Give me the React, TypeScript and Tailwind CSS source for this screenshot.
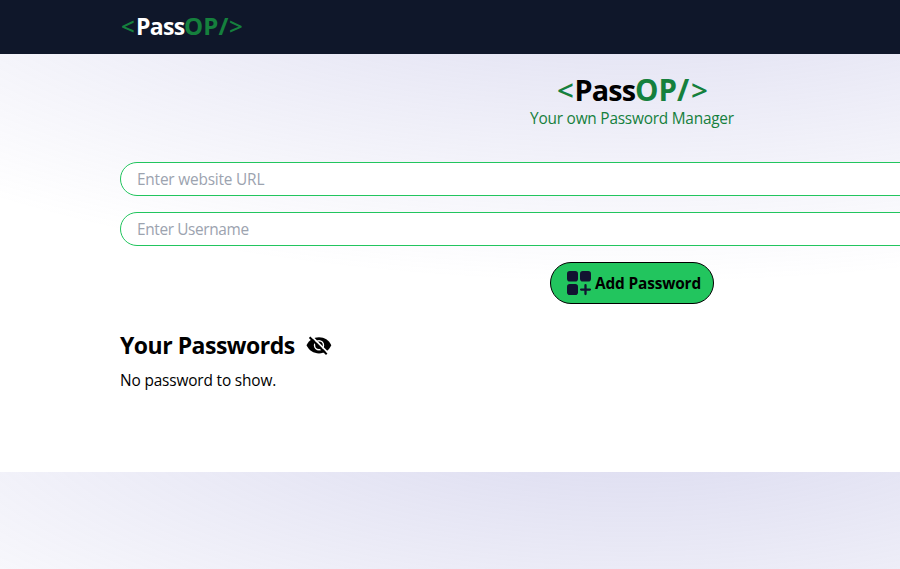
function AddIcon() {
  return (
    <svg width="28" height="28" viewBox="0 0 28 28" fill="#121331" className="shrink-0">
      <rect x="2" y="2" width="11" height="10.600" rx="2.800" />
      <rect x="15" y="2" width="11" height="10.600" rx="2.800" />
      <rect x="2" y="15" width="11" height="11" rx="2.800" />
      <path d="M20.500 16.200v8.800M16.100 20.600h8.800" stroke="#121331" strokeWidth="2.300" strokeLinecap="round" />
    </svg>
  );
}

function HiddenIcon() {
  return (
    <svg width="26" height="20" viewBox="0 0 26 20" className="shrink-0">
      <path d="M.5 9.300C3 4 7.600 1.200 13 1.200S23 4 25.300 9.300C23 14.600 18.400 17.400 13 17.400S3 14.600.5 9.300Z" fill="#000" />
      <circle cx="13" cy="9.300" r="4.500" fill="none" stroke="#fff" strokeWidth="1.400" />
      <path d="M5.300 0 22.600 17.300" stroke="#fff" strokeWidth="1.800" />
      <path d="M3.600 1.200 20.700 18.300" stroke="#000" strokeWidth="2" />
    </svg>
  );
}

function NavBrand() {
  return (
    <div className="flex pl-px text-[24px] leading-8 font-bold text-[#15803d]">
      <span className="w-[15px] font-semibold">&lt;</span>
      <span className="w-[48px] text-[23px] tracking-[-0.7px] text-white">Pass</span>
      <span className="w-[45px] tracking-[0.2px]">OP/</span>
      <span className="font-semibold">&gt;</span>
    </div>
  );
}

function Brand() {
  return (
    <h1 className="flex pl-px text-[29.5px] leading-9 font-bold text-[#15803d]">
      <span className="w-[17.5px] font-semibold">&lt;</span>
      <span className="w-[60.5px] text-[28.8px] tracking-[-0.9px] text-black">Pass</span>
      <span className="w-[56px]">OP/</span>
      <span className="font-semibold">&gt;</span>
    </h1>
  );
}

const field =
  "h-[34px] min-w-0 flex-1 rounded-full border border-[#22c55e] bg-white px-4 pt-px text-[15.4px] outline-none placeholder:text-[#9ca3af]";

export default function App() {
  return (
    <div className="h-[569px] w-full overflow-hidden bg-white font-['Open_Sans','Noto_Sans',sans-serif] text-[15.4px] text-black">
      <div className="h-[569px] w-[1264px] bg-[radial-gradient(ellipse_80%_80%_at_50%_-20%,rgba(120,119,198,0.3),rgba(255,255,255,0))] bg-[length:1264px_472px] bg-repeat-y">
        <nav className="flex h-[54px] items-center bg-[#0f172a] px-[120px] pb-0.5">
          <NavBrand />
        </nav>
        <main className="px-[120px] pt-[18px]">
          <header className="flex flex-col items-center">
            <Brand />
            <p className="leading-[22px] tracking-[-0.22px] text-[#15803d]">Your own Password Manager</p>
          </header>
          <form className="mt-8 flex flex-col items-center gap-4">
            <div className="flex w-full">
              <input className={`${field} tracking-[-0.19px]`} placeholder="Enter website URL" />
            </div>
            <div className="flex w-full">
              <input className={`${field} tracking-[-0.36px]`} placeholder="Enter Username" />
            </div>
            <button
              type="button"
              className="flex h-[42px] w-[164px] items-center rounded-full border border-black bg-[#22c55e] pl-3.5 font-bold tracking-[-0.15px] whitespace-nowrap"
            >
              <AddIcon />
              <span className="pt-0.5 pl-0.5">Add Password</span>
            </button>
          </form>
          <section className="mt-[25px]">
            <div className="flex h-8 items-center">
              <h2 className="w-[185.5px] text-[23px] font-bold tracking-[-0.5px] whitespace-nowrap">Your Passwords</h2>
              <div className="pt-px">
                <HiddenIcon />
              </div>
            </div>
            <p className="mt-2 leading-6 tracking-[-0.15px]">No password to show.</p>
          </section>
        </main>
      </div>
    </div>
  );
}
